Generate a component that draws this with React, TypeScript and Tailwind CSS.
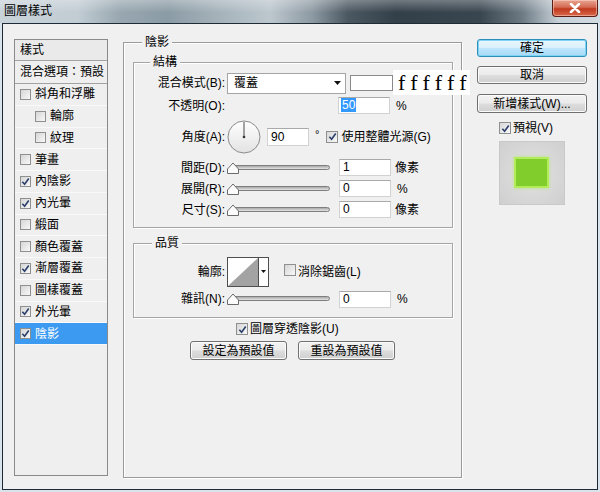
import clsx from "clsx";

function Check({ checked, small }: { checked?: boolean; small?: boolean }) {
  return (
    <span
      className={clsx(
        "inline-flex shrink-0 items-center justify-center border border-[#8e8f8f] bg-[linear-gradient(135deg,#d6d6d6,#f8f8f8)]",
        small ? "h-[11px] w-[11px]" : "h-[12px] w-[12px]"
      )}
    >
      {checked && (
        <svg viewBox="0 0 10 10" className="h-[9px] w-[9px]">
          <path d="M1.5 5.2 L4 8 L8.6 1.6" fill="none" stroke="#2b3f6b" strokeWidth="1.8" />
        </svg>
      )}
    </span>
  );
}

function Slider() {
  return (
    <div className="relative h-[12px] w-[103px] shrink-0">
      <div className="absolute left-[4px] right-0 top-[3px] h-[5px] rounded-full border border-[#7f7f7f] bg-[linear-gradient(#a9a9a9,#e4e4e4)]" />
      <svg className="absolute left-0 top-0" width="12" height="12" viewBox="0 0 12 12">
        <path d="M0.5 11.5 V7 L6 1 L11.5 7 V11.5 Z" fill="#fbfbfb" stroke="#6b6b6b" />
      </svg>
    </div>
  );
}

function Field({ value, w = "w-[52px]", selected }: { value: string; w?: string; selected?: boolean }) {
  return (
    <div className={clsx("h-[17px] shrink-0 border border-[#d2d2d2] border-t-[#a9a9a9] bg-white pl-[2px] leading-[15px]", w)}>
      <span className={clsx("px-[1px]", selected && "bg-[#3399ff] text-white")}>{value}</span>
    </div>
  );
}

function Label({ children }: { children: React.ReactNode }) {
  return <div className="w-[91px] shrink-0 whitespace-nowrap text-right">{children}</div>;
}

function Btn({ children, primary, className }: { children: React.ReactNode; primary?: boolean; className?: string }) {
  return (
    <div
      className={clsx(
        "flex items-center justify-center rounded-[3px] border leading-none",
        primary
          ? "border-[#2d8fbb] bg-[linear-gradient(#eaf6fd_0%,#d9f0fc_48%,#bee6fd_52%,#a7d9f5_100%)] shadow-[inset_0_0_0_1px_#7fd4f4]"
          : "border-[#707070] bg-[linear-gradient(#f2f2f2_0%,#ebebeb_48%,#dddddd_52%,#cfcfcf_100%)] shadow-[inset_0_0_0_1px_#fbfbfb]",
        className
      )}
    >
      {children}
    </div>
  );
}

function Legend({ children, ml }: { children: React.ReactNode; ml: string }) {
  return <div className={clsx("-mt-[8px] w-fit bg-[#f0f0f0] px-[3px] leading-[14px]", ml)}>{children}</div>;
}

const styles: { name: string; checked: boolean; indent?: boolean; active?: boolean }[] = [
  { name: "斜角和浮雕", checked: false },
  { name: "輪廓", checked: false, indent: true },
  { name: "紋理", checked: false, indent: true },
  { name: "筆畫", checked: false },
  { name: "內陰影", checked: true },
  { name: "內光暈", checked: true },
  { name: "緞面", checked: false },
  { name: "顏色覆蓋", checked: false },
  { name: "漸層覆蓋", checked: true },
  { name: "圖樣覆蓋", checked: false },
  { name: "外光暈", checked: true },
  { name: "陰影", checked: true, active: true },
];

export default function App() {
  return (
    <div className="relative h-[492px] w-[600px] overflow-hidden bg-[#d9e3e9] font-['Liberation_Sans','Noto_Sans_CJK_TC',sans-serif] text-[12px] text-black">
      {/* title bar */}
      <div className="flex h-[23px] items-start justify-between bg-[linear-gradient(180deg,rgba(255,255,255,0.3),rgba(255,255,255,0)_55%),linear-gradient(90deg,#c8d2d9_0%,#c1ccd3_13%,#98a7b0_20%,#8b9ba5_28%,#a4b1b9_36%,#bcc7ce_45%,#8e9aa3_52%,#4b5761_58%,#333f49_66%,#39454f_80%,#6d7a84_87%,#c6d0d7_93%,#d3dce2_100%)]">
        <span className="pl-[4px] pt-[3px] leading-[16px]">圖層樣式</span>
        <div className="mr-[2px] flex h-[17px] w-[46px] items-center justify-center rounded-b-[4px] border border-t-0 border-[#5b1d14] bg-[linear-gradient(#e8a593_0%,#d46a52_45%,#c0391f_55%,#d9684a_100%)] shadow-[inset_0_0_0_1px_rgba(255,220,210,0.5)]">
          <svg width="12" height="10" viewBox="0 0 12 10">
            <path d="M2 1 L10 9 M10 1 L2 9" stroke="#fff" strokeWidth="2.6" strokeLinecap="round" />
          </svg>
        </div>
      </div>

      {/* dialog body */}
      <div className="ml-[2px] flex h-[467px] w-[596px] items-start border border-[#1e2c37] bg-[#f0f0f0]">
        {/* style list */}
        <div className="ml-[11px] mt-[15px] flex h-[437px] w-[94px] shrink-0 flex-col border border-[#8a8a8a] bg-[#efefef]">
          <div className="flex h-[21px] shrink-0 items-center border-b border-[#a3a3a3] bg-[#eaeaea] pl-[5px]">樣式</div>
          <div className="flex h-[23px] shrink-0 items-center whitespace-nowrap border-b border-[#a3a3a3] pl-[5px]">混合選項：預設</div>
          {styles.map((s) => (
            <div
              key={s.name}
              className={clsx(
                "flex h-[21.75px] shrink-0 items-center gap-[4px] border-b border-[#f9f9f9] whitespace-nowrap",
                s.indent ? "pl-[20px]" : "pl-[5px]",
                s.active && "bg-[#3c9af0] text-white"
              )}
            >
              <Check checked={s.checked} small />
              <span>{s.name}</span>
            </div>
          ))}
        </div>

        {/* main group */}
        <div className="ml-[15px] mt-[18px] flex h-[436px] w-[339px] shrink-0 flex-col border border-[#9a9a9a] shadow-[1px_1px_0_#ffffff,inset_1px_1px_0_#ffffff]">
          <Legend ml="ml-[18px]">陰影</Legend>

          {/* 結構 */}
          <div className="ml-[9px] mt-[13px] flex h-[166px] w-[320px] flex-col border border-[#a5a5a5] shadow-[1px_1px_0_#ffffff,inset_1px_1px_0_#ffffff]">
            <Legend ml="ml-[16px]">結構</Legend>
            <div className="mt-[3px] flex h-[22px] items-center gap-[2px]">
              <Label>混合模式(B):</Label>
              <div className="flex h-[21px] w-[119px] items-center justify-between border border-[#a5a5a5] bg-white pl-[6px] pr-[4px]">
                <span>覆蓋</span>
                <svg width="7" height="4" viewBox="0 0 7 4">
                  <path d="M0 0 H7 L3.5 4 Z" fill="#111" />
                </svg>
              </div>
              <div className="ml-[2px] h-[16px] w-[43px] border border-[#8a8a8a] bg-white" />
            </div>
            <div className="flex h-[23px] items-center gap-[2px]">
              <Label>不透明(O):</Label>
              <div className="ml-[111px] flex items-center">
                <Field value="50" selected />
                <span className="ml-[6px]">%</span>
              </div>
            </div>
            <div className="flex h-[40px] items-center gap-[2px]">
              <Label>角度(A):</Label>
              <svg width="34" height="34" viewBox="0 0 34 34" className="shrink-0">
                <defs>
                  <linearGradient id="dial" x1="0" y1="0" x2="0" y2="1">
                    <stop offset="0" stopColor="#ffffff" />
                    <stop offset="1" stopColor="#e2e2e2" />
                  </linearGradient>
                </defs>
                <circle cx="17" cy="17" r="16" fill="url(#dial)" stroke="#8c8c8c" />
                <line x1="17" y1="17" x2="17" y2="2" stroke="#4a4a4a" strokeWidth="1" />
                <circle cx="17" cy="17" r="1.3" fill="#333" />
              </svg>
              <div className="ml-[4px] flex items-center">
                <div className="flex h-[18px] w-[42px] items-center border border-[#d2d2d2] border-t-[#a9a9a9] bg-white pl-[3px]">90</div>
                <span className="ml-[6px] -mt-[6px] text-[11px] leading-none">°</span>
                <span className="ml-[7px]">
                  <Check checked />
                </span>
                <span className="ml-[3px] whitespace-nowrap">使用整體光源(G)</span>
              </div>
            </div>
            {[
              ["間距(D):", "1", "像素"],
              ["展開(R):", "0", "%"],
              ["尺寸(S):", "0", "像素"],
            ].map(([label, v, unit]) => (
              <div key={label} className="flex h-[21px] items-center gap-[2px]">
                <Label>{label}</Label>
                <Slider />
                <div className="ml-[7px] flex items-center">
                  <Field value={v} />
                  <span className={unit === "%" ? "ml-[6px]" : "ml-[4px]"}>{unit}</span>
                </div>
              </div>
            ))}
          </div>

          {/* 品質 */}
          <div className="ml-[9px] mt-[15px] flex h-[75px] w-[320px] flex-col border border-[#a5a5a5] shadow-[1px_1px_0_#ffffff,inset_1px_1px_0_#ffffff]">
            <Legend ml="ml-[18px]">品質</Legend>
            <div className="mt-[6px] flex h-[31px] items-center gap-[2px]">
              <Label>輪廓:</Label>
              <div className="flex h-[30px] w-[42px] shrink-0 border border-[#4e4e4e] bg-white">
                <svg width="30" height="28" viewBox="0 0 30 28" className="shrink-0">
                  <path d="M0 28 L30 0 L30 28 Z" fill="#a3a3a3" />
                </svg>
                <div className="flex flex-1 items-center justify-center border-l border-[#4e4e4e]">
                  <svg width="5" height="3" viewBox="0 0 5 3">
                    <path d="M0 0 H5 L2.5 3 Z" fill="#111" />
                  </svg>
                </div>
              </div>
              <span className="ml-[13px]">
                <Check />
              </span>
              <span className="whitespace-nowrap">消除鋸齒(L)</span>
            </div>
            <div className="mt-[2px] flex h-[20px] items-center gap-[2px]">
              <Label>雜訊(N):</Label>
              <Slider />
              <div className="ml-[7px] flex items-center">
                <Field value="0" />
                <span className="ml-[6px]">%</span>
              </div>
            </div>
          </div>

          <div className="mt-[2px] flex h-[18px] items-center gap-[2px] pl-[112px]">
            <Check checked />
            <span className="whitespace-nowrap">圖層穿透陰影(U)</span>
          </div>
          <div className="mt-[3px] flex justify-center gap-[11px]">
            <Btn className="h-[19px] w-[97px]">設定為預設值</Btn>
            <Btn className="h-[19px] w-[97px]">重設為預設值</Btn>
          </div>
        </div>

        {/* right column */}
        <div className="ml-[15px] mt-[15px] flex w-[110px] shrink-0 flex-col">
          <Btn primary className="h-[18px]">確定</Btn>
          <Btn className="mt-[9px] h-[18px]">取消</Btn>
          <Btn className="mt-[10px] h-[19px] whitespace-nowrap">新增樣式(W)...</Btn>
          <div className="mt-[8px] flex h-[14px] items-center gap-[2px] pl-[22px]">
            <Check checked />
            <span>預視(V)</span>
          </div>
          <div className="ml-[22px] mt-[6px] flex h-[64px] w-[66px] items-start border border-[#c9c9c9] bg-[radial-gradient(circle,#e2e2e2,#cfcfcf)]">
            <div className="ml-[14px] mt-[15px] h-[31px] w-[35px] border-2 border-[#b3ec5a] bg-[#80cd2b] shadow-[0_0_3px_#b9e87a]" />
          </div>
        </div>
      </div>

      {/* annotation over the dialog */}
      <div className="absolute left-[393px] top-[70px] flex h-[25px] w-[77px] items-center bg-white pl-[5px] font-['Liberation_Serif',serif] text-[22px] leading-none tracking-[5.3px]">
        ffffff
      </div>
    </div>
  );
}
